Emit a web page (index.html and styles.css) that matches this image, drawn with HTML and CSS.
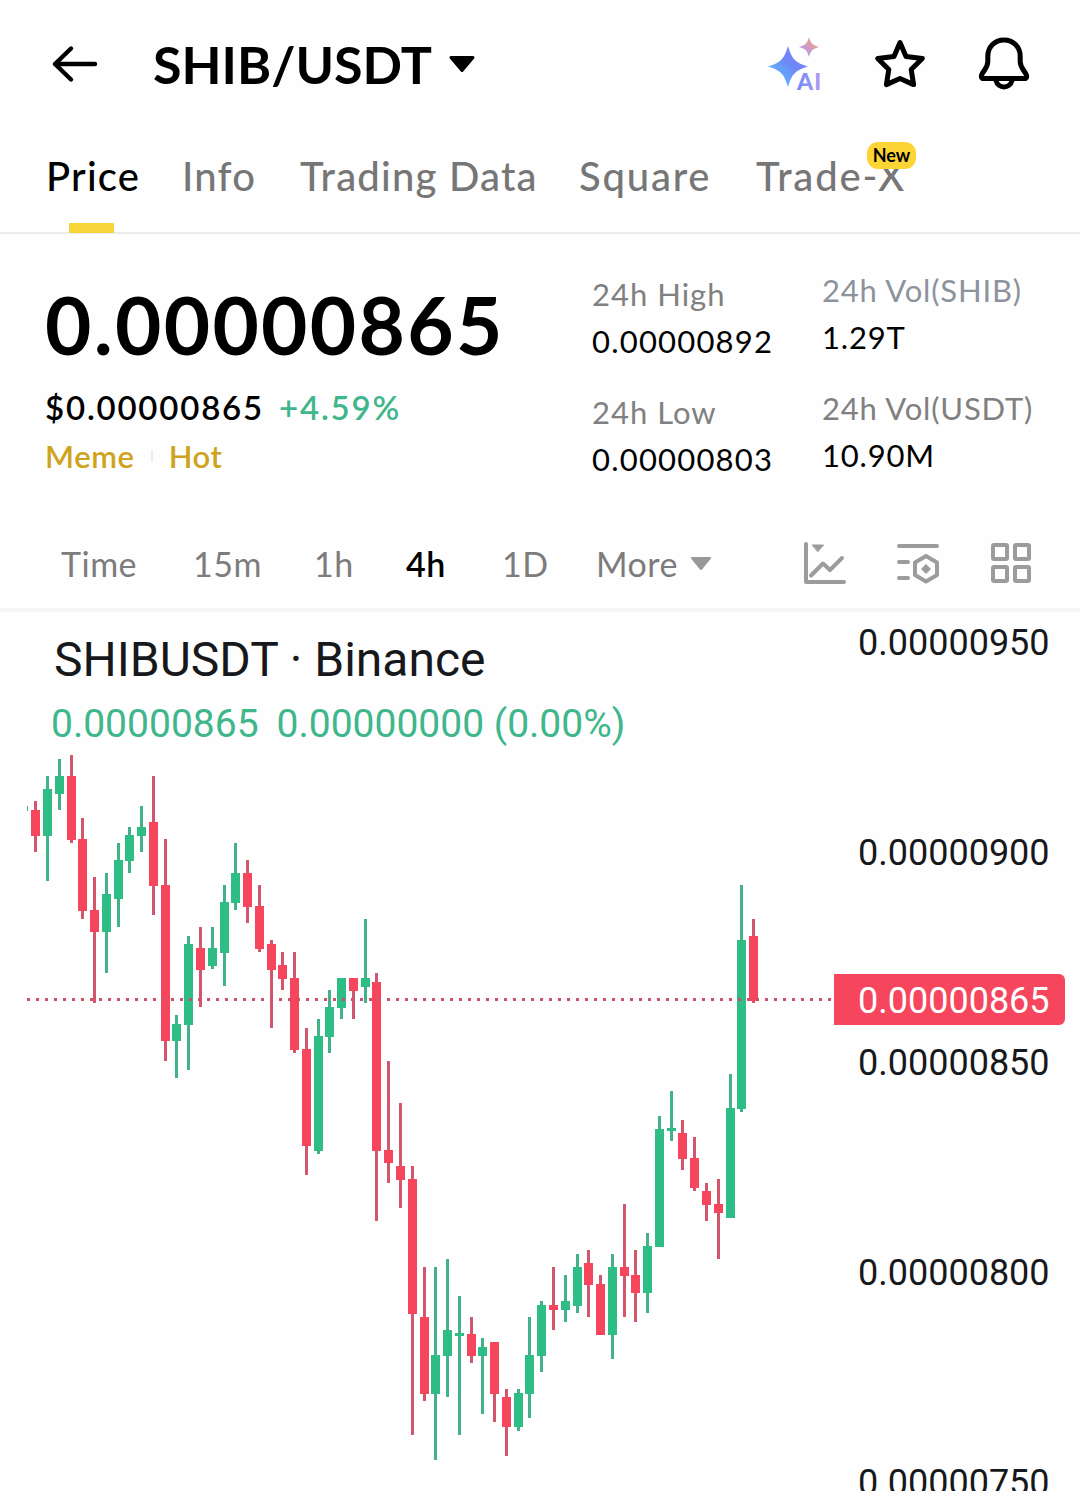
FILE: index.html
```html
<!DOCTYPE html>
<html lang="en">
<head>
    <meta charset="UTF-8">
    <meta name="viewport" content="width=device-width, initial-scale=1.0">
    <title>SHIB/USDT</title>
    <link rel="stylesheet" href="styles.css">
</head>
<body>
    <header class="header">
        <svg class="back" width="50" height="40" viewBox="0 0 50 40" fill="none" stroke="#000" stroke-width="4.4" stroke-linecap="round" stroke-linejoin="round">
            <path d="M45 20H5M21 4.500L5 20l16 15.500"/>
        </svg>
        <h1 class="pair">SHIB/USDT</h1>
        <svg class="pair-caret" width="28" height="20" viewBox="0 0 28 20">
            <path d="M3 3.500H25L14 16.500Z" fill="#000" stroke="#000" stroke-width="3" stroke-linejoin="round"/>
        </svg>
        <div class="header-icons">
            <svg width="60" height="60" viewBox="0 0 60 60">
                <defs>
                    <linearGradient id="bigStar" x1="0" y1="1" x2="1" y2="0">
                        <stop offset="0.1" stop-color="#5cc4fb"/>
                        <stop offset="0.55" stop-color="#6c88f8"/>
                        <stop offset="1" stop-color="#9079f2"/>
                    </linearGradient>
                    <linearGradient id="smallStar" x1="0" y1="1" x2="1" y2="0">
                        <stop offset="0.2" stop-color="#b59af2"/>
                        <stop offset="0.85" stop-color="#f0a07c"/>
                    </linearGradient>
                    <linearGradient id="aiText" x1="0" y1="0" x2="1" y2="0">
                        <stop offset="0" stop-color="#6a8bf8"/>
                        <stop offset="1" stop-color="#b59af2"/>
                    </linearGradient>
                </defs>
                <path d="M22 11C26 24 29 27.500 42 31.500C29 35.500 26 39 22 52C18 39 15 35.500 2 31.500C15 27.500 18 24 22 11Z" fill="url(#bigStar)"/>
                <path d="M43 2C44.800 8.500 46.500 10.200 53 12C46.500 13.800 44.800 15.500 43 22C41.200 15.500 39.500 13.800 33 12C39.500 10.200 41.200 8.500 43 2Z" fill="url(#smallStar)"/>
                <text class="ai" x="31" y="55" fill="url(#aiText)">AI</text>
            </svg>
            <svg width="60" height="60" viewBox="0 0 60 60" fill="none" stroke="#000" stroke-width="5" stroke-linejoin="round">
                <path d="M30 7.500L36 21.500L52.300 23.400L41.200 34.500L43.600 49.600L30 43.500L16.400 49.600L18.800 34.500L7.700 23.400L24 21.500Z"/>
            </svg>
            <svg width="60" height="60" viewBox="0 0 60 60" fill="none" stroke="#000" stroke-width="5" stroke-linecap="round" stroke-linejoin="round">
                <path d="M8.500 43.500H51.500Q53.500 42.500 52 39C48 32.500 46.200 31.500 46.200 26.500V21.500C46.200 11.500 39 5 30 5S13.800 11.500 13.800 21.500V26.500C13.800 31.500 12 32.500 8 39Q6.500 42.500 8.500 43.500Z"/>
                <path d="M22 45.500C24 54 36 54 38 45.500"/>
            </svg>
        </div>
    </header>

    <nav class="tabs">
        <a class="tab active">Price</a>
        <a class="tab">Info</a>
        <a class="tab">Trading Data</a>
        <a class="tab">Square</a>
        <a class="tab">Trade-X<span class="badge">New</span></a>
    </nav>

    <section class="summary">
        <div class="price-block">
            <div class="price">0.00000865</div>
            <div class="price-sub"><span>$0.00000865</span><span class="change">+4.59%</span></div>
            <div class="tags"><span>Meme</span><i class="tag-sep"></i><span>Hot</span></div>
        </div>
        <dl class="stats">
            <dt>24h High</dt>
            <dd>0.00000892</dd>
            <dt>24h Low</dt>
            <dd>0.00000803</dd>
        </dl>
        <dl class="stats volume">
            <dt class="cool">24h Vol(SHIB)</dt>
            <dd>1.29T</dd>
            <dt>24h Vol(USDT)</dt>
            <dd>10.90M</dd>
        </dl>
    </section>

    <div class="intervals">
        <span>Time</span>
        <span>15m</span>
        <span>1h</span>
        <span class="selected">4h</span>
        <span>1D</span>
        <span class="more">More
            <svg width="22" height="16" viewBox="0 0 22 16"><path d="M2 2H20L11 13Z" fill="#999" stroke="#999" stroke-width="2" stroke-linejoin="round"/></svg>
        </span>
        <svg width="44" height="44" viewBox="0 0 44 44" fill="none" stroke="#9c9c9c" stroke-width="4" stroke-linecap="round" stroke-linejoin="round">
            <path d="M3 3V41H41M8 34.500L20 22.500L27 29L39 17"/>
            <path d="M9.500 4H20.500L15 10.500Z" fill="#9c9c9c" stroke-width="1"/>
        </svg>
        <svg width="44" height="44" viewBox="0 0 44 44" fill="none" stroke="#9c9c9c" stroke-width="4" stroke-linecap="round" stroke-linejoin="round">
            <path d="M3 5H41M3 21H12M3 37H12M30 15L41 21.500V34L30 40.500L19 34V21.500Z"/>
            <path d="M30 23L35 28L30 33L25 28Z" fill="#9c9c9c" stroke="none"/>
        </svg>
        <svg width="44" height="44" viewBox="0 0 44 44" fill="none" stroke="#9c9c9c" stroke-width="4" stroke-linejoin="round">
            <rect x="4" y="4" width="14" height="14" rx="1"/>
            <rect x="26" y="4" width="14" height="14" rx="1"/>
            <rect x="4" y="26" width="14" height="14" rx="1"/>
            <rect x="26" y="26" width="14" height="14" rx="1"/>
        </svg>
    </div>

    <main class="chart">
        <div class="legend">
            <div class="symbol">SHIBUSDT · Binance</div>
            <div class="quote"><span>0.00000865</span><span>0.00000000 (0.00%)</span></div>
        </div>
        <svg id="candles" class="candles" width="834" height="879" viewBox="0 612 834 879" shape-rendering="crispEdges"></svg>
        <div class="axis">
            <span>0.00000950</span>
            <span>0.00000900</span>
            <span>0.00000850</span>
            <span>0.00000800</span>
            <span>0.00000750</span>
        </div>
        <div class="last-price">0.00000865</div>
    </main>

    <script>
        // direction, x, high, body top, body bottom, low
        const candles = [
            ['d', 31, 801, 810, 836, 852], ['u', 43, 776, 789, 836, 881], ['u', 55, 759, 776, 794, 810],
            ['d', 67, 755, 776, 840, 843], ['d', 78, 818, 839, 911, 919], ['d', 90, 877, 910, 932, 1003],
            ['u', 102, 873, 894, 932, 973], ['u', 114, 843, 860, 899, 927], ['u', 125, 827, 835, 861, 873],
            ['u', 137, 806, 827, 836, 852], ['d', 149, 776, 822, 886, 915], ['d', 161, 839, 885, 1041, 1061],
            ['u', 172, 1015, 1024, 1041, 1078], ['u', 184, 936, 944, 1025, 1070], ['d', 196, 927, 948, 970, 1007],
            ['u', 208, 927, 948, 966, 969], ['u', 220, 885, 902, 953, 986], ['u', 231, 843, 873, 903, 910],
            ['d', 243, 860, 873, 907, 923], ['d', 255, 885, 906, 949, 952], ['d', 267, 940, 944, 970, 1028],
            ['d', 278, 952, 965, 979, 990], ['d', 290, 952, 978, 1050, 1053], ['d', 302, 1028, 1049, 1146, 1175],
            ['u', 314, 1019, 1036, 1151, 1154], ['u', 325, 990, 1007, 1037, 1053], ['u', 337, 978, 978, 1008, 1019],
            ['d', 349, 978, 978, 991, 1019], ['u', 361, 919, 978, 987, 1003], ['d', 372, 973, 982, 1151, 1221],
            ['d', 384, 1061, 1150, 1163, 1183], ['d', 396, 1103, 1166, 1180, 1208], ['d', 408, 1166, 1179, 1314, 1435],
            ['d', 420, 1267, 1317, 1394, 1401], ['u', 431, 1267, 1355, 1394, 1460], ['u', 443, 1259, 1330, 1356, 1397],
            ['u', 455, 1296, 1333, 1336, 1435], ['d', 467, 1317, 1334, 1356, 1363], ['u', 478, 1338, 1347, 1356, 1414],
            ['d', 490, 1342, 1342, 1394, 1422], ['d', 502, 1389, 1397, 1427, 1456], ['u', 514, 1389, 1393, 1427, 1431],
            ['u', 525, 1317, 1355, 1394, 1418], ['u', 537, 1301, 1305, 1356, 1372], ['d', 549, 1267, 1305, 1310, 1330],
            ['u', 561, 1275, 1301, 1310, 1322], ['u', 573, 1254, 1267, 1306, 1313], ['d', 584, 1250, 1263, 1285, 1317],
            ['d', 596, 1275, 1284, 1335, 1335], ['u', 608, 1254, 1267, 1335, 1359], ['d', 620, 1204, 1267, 1276, 1317],
            ['d', 631, 1250, 1275, 1293, 1322], ['u', 643, 1233, 1246, 1293, 1313], ['u', 655, 1116, 1129, 1247, 1247],
            ['u', 667, 1091, 1128, 1131, 1141], ['d', 678, 1120, 1133, 1159, 1170], ['d', 690, 1137, 1158, 1188, 1191],
            ['d', 702, 1183, 1191, 1205, 1221], ['d', 714, 1179, 1204, 1213, 1259], ['u', 726, 1074, 1108, 1218, 1218],
            ['u', 737, 885, 940, 1109, 1112], ['d', 749, 919, 936, 1001, 1003]
        ];

        const svg = document.getElementById('candles');

        function addRect(x, y, width, height, className) {
            const rect = document.createElementNS('http://www.w3.org/2000/svg', 'rect');
            rect.setAttribute('x', x);
            rect.setAttribute('y', y);
            rect.setAttribute('width', width);
            rect.setAttribute('height', height);
            rect.setAttribute('class', className);
            svg.appendChild(rect);
        }

        // edge of the candle that is scrolled off
        addRect(27, 806, 1, 5, 'wick-u');

        candles.forEach(function([dir, x, high, top, bottom, low]) {
            addRect(x + 3, high, 3, low - high, 'wick-' + dir);
            addRect(x, top, 9, bottom - top, 'body-' + dir);
        });

        // last price line
        for (let x = 27; x < 834; x += 9) {
            addRect(x, 998, 3, 3, 'dot');
        }
    </script>
</body>
</html>
```
FILE: styles.css
```css
* {
    margin: 0;
    padding: 0;
    box-sizing: border-box;
}

body {
    font-family: Lato, "Liberation Sans", sans-serif;
    background: #fefefe;
    color: #000;
    width: 1080px;
    height: 1498px;
    overflow: hidden;
}

svg {
    display: block;
    flex-shrink: 0;
}

.header {
    display: flex;
    align-items: center;
    height: 128px;
    padding: 0 46px 0 50px;
}

.pair {
    font-size: 52px;
    font-weight: 700;
    line-height: 64px;
    width: 281px;
    margin-left: 53px;
    white-space: nowrap;
}

.pair-caret {
    margin-left: 14px;
}

.header-icons {
    display: flex;
    gap: 44px;
    margin-left: auto;
    padding-top: 2px;
}

.ai {
    font-size: 23px;
    font-weight: 900;
    letter-spacing: 1px;
}

.tabs {
    display: grid;
    grid-template-columns: 136px 118px 279px 177px auto;
    height: 106px;
    padding-left: 46px;
    border-bottom: 2px solid #ececec;
}

.tab {
    position: relative;
    justify-self: start;
    font-size: 40px;
    font-weight: 500;
    line-height: 96px;
    letter-spacing: 1.2px;
    color: #767676;
    white-space: nowrap;
}

.tab:nth-child(4),
.tab:nth-child(5) {
    letter-spacing: 1.8px;
}

.tab.active {
    color: #000;
}

.tab.active::after {
    content: "";
    position: absolute;
    left: 23px;
    bottom: -1px;
    width: 45px;
    height: 10px;
    background: #f8d53a;
}

.badge {
    position: absolute;
    top: 14px;
    left: 111px;
    width: 49px;
    height: 27px;
    border-radius: 11px;
    background: #fcd535;
    color: #000;
    font-size: 18px;
    font-weight: 700;
    line-height: 27px;
    letter-spacing: 0;
    text-align: center;
}

.summary {
    display: grid;
    grid-template-columns: 547px 230px auto;
    height: 284px;
    padding: 37px 0 0 45px;
}

.price {
    font-size: 80px;
    font-weight: 700;
    line-height: 96px;
    letter-spacing: 2.3px;
    margin-top: 5px;
}

.price-sub {
    display: flex;
    gap: 15px;
    font-size: 33px;
    font-weight: 600;
    line-height: 50px;
    letter-spacing: 1.8px;
    margin-top: 10px;
}

.change {
    color: #3fb68b;
}

.tags {
    display: flex;
    align-items: center;
    color: #cfa31b;
    font-size: 31px;
    font-weight: 600;
    line-height: 48px;
    letter-spacing: 0.6px;
}

.tag-sep {
    width: 2px;
    height: 12px;
    margin: 0 16px;
    background: #ebebeb;
}

.stats {
    font-size: 31px;
    line-height: 47px;
    letter-spacing: 1px;
}

.stats dt {
    color: #808080;
}

.stats dt.cool {
    color: #8c939d;
}

.stats dd {
    letter-spacing: 1.2px;
    margin-bottom: 24px;
}

.volume {
    margin-top: -4px;
}

.volume dt,
.volume dd {
    letter-spacing: 0.8px;
}

.intervals {
    display: grid;
    grid-template-columns: 132px 121px 92px 96px 94px 207px 93px 93px 44px;
    align-items: center;
    height: 94px;
    padding-left: 61px;
    border-bottom: 4px solid #f5f5f5;
    color: #7c7c7c;
    font-size: 34px;
    line-height: 50px;
    letter-spacing: 0.5px;
}

.intervals span {
    padding-top: 2px;
}

.selected {
    color: #000;
    font-weight: 600;
}

.more {
    display: flex;
    align-items: center;
    gap: 12px;
}

.chart {
    position: relative;
    display: grid;
    grid-template-columns: 834px auto;
    height: 879px;
    overflow: hidden;
    font-family: Roboto, sans-serif;
}

.legend {
    position: absolute;
    top: 16px;
    left: 51px;
}

.symbol {
    font-size: 48px;
    line-height: 64px;
    padding-left: 3px;
    color: #17181c;
}

.quote {
    display: flex;
    gap: 18px;
    font-size: 39px;
    line-height: 64px;
    color: #3fb68b;
}

.wick-u {
    fill: #43b18a;
}

.wick-d {
    fill: #d2566c;
}

.body-u {
    fill: #2ebd85;
}

.body-d {
    fill: #f6465d;
}

.dot {
    fill: #cc5069;
}

.axis {
    display: flex;
    flex-direction: column;
    gap: 148px;
    padding-left: 24px;
    font-size: 36px;
    line-height: 62px;
    color: #17181c;
}

.last-price {
    position: absolute;
    top: 362px;
    left: 834px;
    width: 231px;
    height: 51px;
    padding-left: 24px;
    border-radius: 0 6px 6px 0;
    background: #f6465d;
    color: #fff;
    font-size: 36px;
    line-height: 54px;
}
```
